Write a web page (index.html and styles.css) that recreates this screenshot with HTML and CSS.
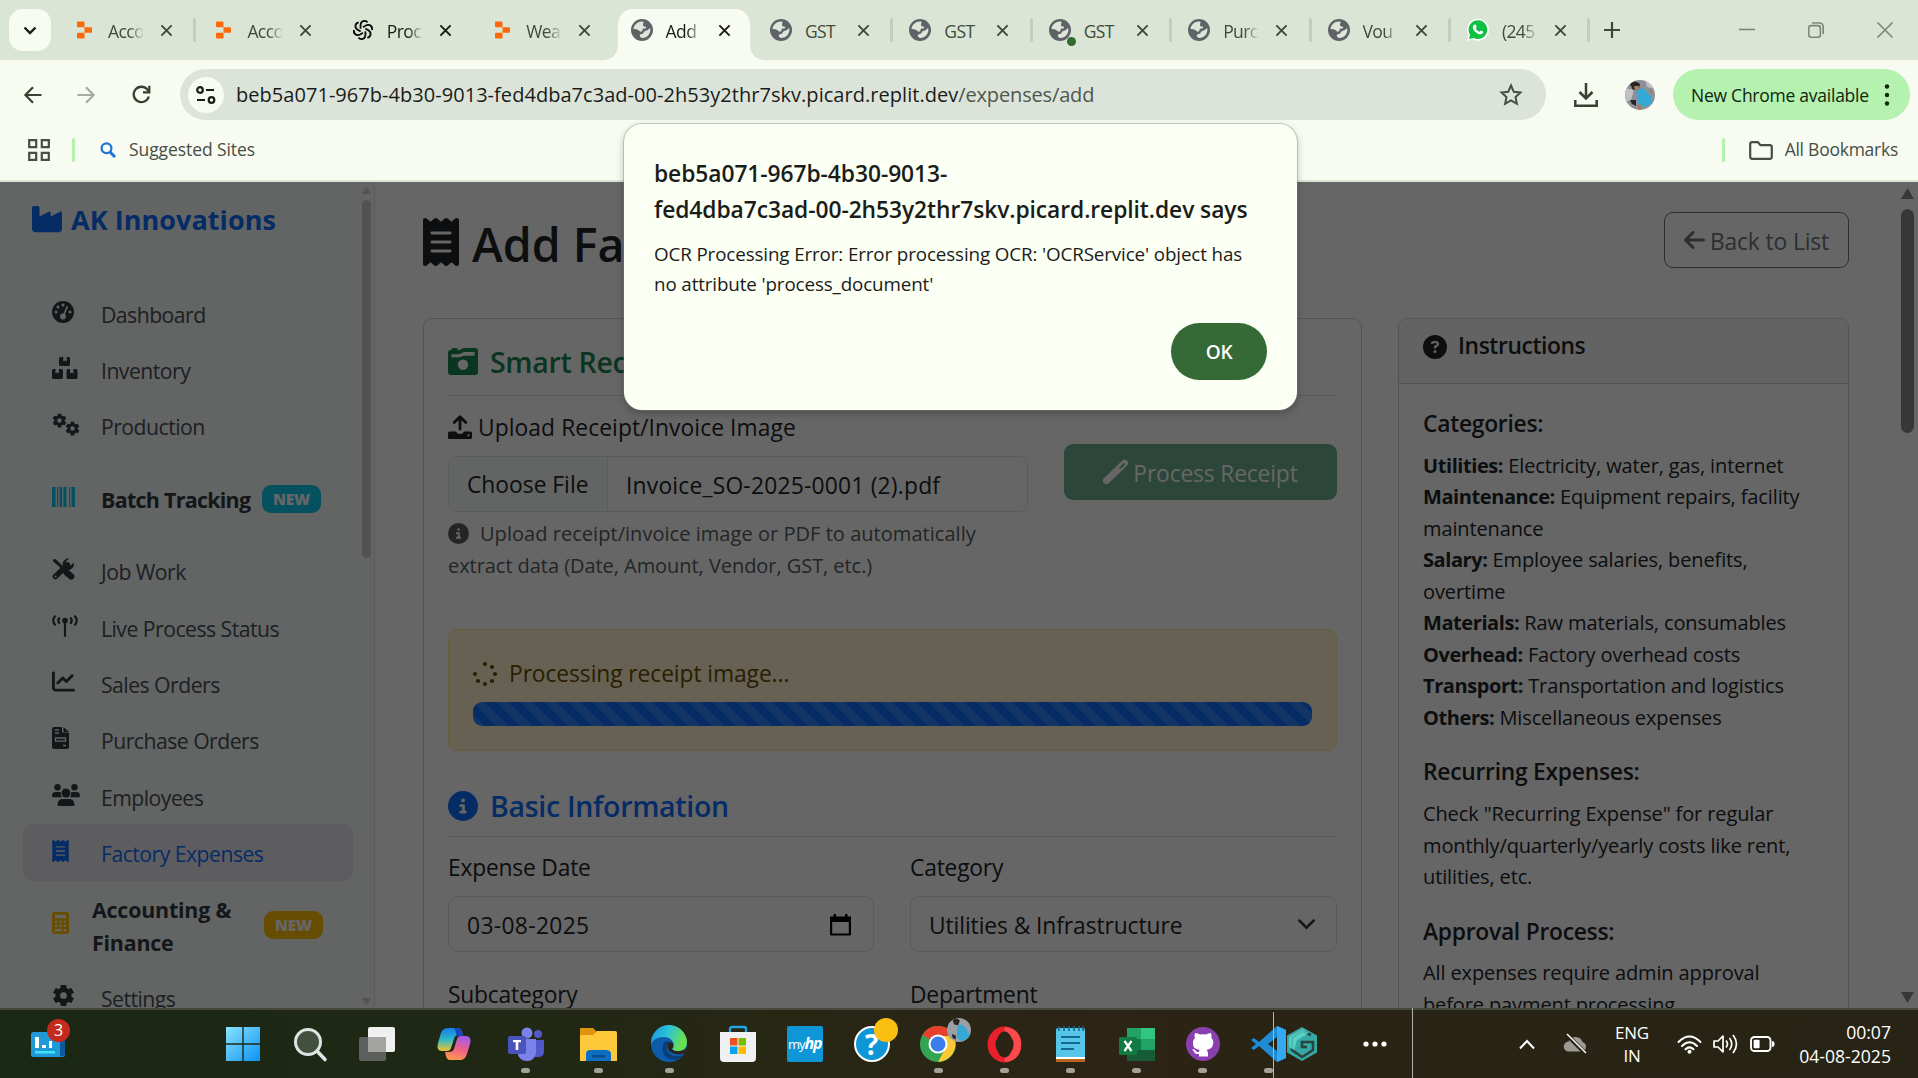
FILE: index.html
```html
<!DOCTYPE html>
<html lang="en">
<head>
<meta charset="utf-8">
<title>Add Factory Expense</title>
<link rel="stylesheet" href="styles.css">
</head>
<body>
<svg class="defs" aria-hidden="true">
  <defs>
    <symbol id="globe" viewBox="0 0 22 22"><circle cx="11" cy="11" r="11" fill="#5f6368"/><path d="M12 2.600C7.500 1.800 3 5.500 2.500 10c2.500-.3 4.500.4 6 2 1.200 1.300 3 .6 3-1 0-1.400 1.200-1.500 2.500-1.400 1.500 0 1.700-1.600.2-2-1.700-.4-2.200-.8-2.200-2.200C12 4.200 13.300 4 12 2.600zM19.200 9c-1.400 1-2 2.400-4.200 2.700-2.300.3-2 2-3 2.700-1.300.9-3 .4-3.200 1.900-.1 1.200.6 2.200 2.200 2.700C16.500 19 20.300 14 19.200 9z" fill="#dde6d8"/></symbol>
    <symbol id="replit" viewBox="0 0 16 18"><path d="M1 0h6q1 0 1 1v5H1Q0 6 0 5V1q0-1 1-1zM8 6h7q1 0 1 1v4q0 1-1 1H8zM1 12h7v5q0 1-1 1H1q-1 0-1-1v-4q0-1 1-1z" fill="#fb6a0a"/></symbol>
    <symbol id="close" viewBox="0 0 14 14"><path d="M1.500 1.500l11 11M12.500 1.500l-11 11" stroke="currentColor" stroke-width="2.100" fill="none"/></symbol>
    <symbol id="receipt" viewBox="0 0 384 512"><path fill="currentColor" d="M14 2.200C22.500-1.700 32.500-.3 39.600 5.800L80 40.400 120.400 5.800c9-7.700 22.300-7.700 31.200 0L192 40.400 232.400 5.800c9-7.700 22.300-7.700 31.200 0L304 40.400 344.400 5.800c7.100-6.100 17.100-7.500 25.600-3.600s14 12.400 14 21.800V488c0 9.400-5.500 17.900-14 21.800s-18.500 2.500-25.600-3.600L304 471.600l-40.400 34.600c-9 7.700-22.300 7.700-31.200 0L192 471.600l-40.400 34.600c-9 7.700-22.300 7.700-31.200 0L80 471.600 39.600 506.200c-7.100 6.100-17.100 7.500-25.600 3.600S0 497.400 0 488V24C0 14.600 5.500 6.100 14 2.200zM96 144c-8.800 0-16 7.200-16 16s7.200 16 16 16H288c8.800 0 16-7.200 16-16s-7.200-16-16-16H96zM80 352c0 8.800 7.200 16 16 16H288c8.800 0 16-7.200 16-16s-7.200-16-16-16H96c-8.800 0-16 7.200-16 16zM96 240c-8.800 0-16 7.200-16 16s7.200 16 16 16H288c8.800 0 16-7.200 16-16s-7.200-16-16-16H96z"/></symbol>
    <symbol id="info" viewBox="0 0 512 512"><path fill="currentColor" d="M256 512A256 256 0 1 0 256 0a256 256 0 1 0 0 512zM216 336h24V272H216c-13.300 0-24-10.700-24-24s10.700-24 24-24h48c13.300 0 24 10.700 24 24v88h8c13.300 0 24 10.700 24 24s-10.700 24-24 24H216c-13.300 0-24-10.700-24-24s10.700-24 24-24zm40-208a32 32 0 1 1 0 64 32 32 0 1 1 0-64z"/></symbol>
    <symbol id="gear" viewBox="0 0 24 24"><g stroke="currentColor" fill="none"><circle cx="12" cy="12" r="6" stroke-width="5"/><path d="M12 1v4.500M12 18.500V23M2.500 6.500l3.900 2.200M17.600 15.300l3.900 2.200M2.500 17.500l3.900-2.200M17.600 8.700l3.900-2.200" stroke-width="6" stroke-linejoin="round"/></g></symbol>
  </defs>
</svg>

<header class="chrome">
  <div class="tabstrip">
    <button class="tab-search"><svg width="14" height="9" viewBox="0 0 14 9"><path d="M1.500 1.500L7 7l5.500-5.500" fill="none" stroke="#1a1c19" stroke-width="2.400"/></svg></button>
    <div class="tabs">
      <div class="tab sep"><svg class="fav rep"><use href="#replit"/></svg><span class="tt">Acco</span><svg class="x"><use href="#close"/></svg></div>
      <div class="tab"><svg class="fav rep"><use href="#replit"/></svg><span class="tt">Acco</span><svg class="x"><use href="#close"/></svg></div>
      <div class="tab dark"><svg class="fav" viewBox="0 0 22 22"><g fill="none" stroke="#111" stroke-width="1.500"><g id="petal"><path d="M11 8.200l3.300-1.900c3-1.500 6.400 1.300 5.500 4.600"/><path d="M8.500 9.500V6C8.600 2 13 .4 15.600 3.200"/></g><use href="#petal" transform="rotate(60 11 11)"/><use href="#petal" transform="rotate(120 11 11)"/><use href="#petal" transform="rotate(180 11 11)"/><use href="#petal" transform="rotate(240 11 11)"/><use href="#petal" transform="rotate(300 11 11)"/></g></svg><span class="tt">Proc</span><svg class="x"><use href="#close"/></svg></div>
      <div class="tab"><svg class="fav rep"><use href="#replit"/></svg><span class="tt">Wea</span><svg class="x"><use href="#close"/></svg></div>
      <div class="tab active dark"><svg class="fav"><use href="#globe"/></svg><span class="tt">Add</span><svg class="x"><use href="#close"/></svg></div>
      <div class="tab sep"><svg class="fav"><use href="#globe"/></svg><span class="tt full">GST</span><svg class="x"><use href="#close"/></svg></div>
      <div class="tab sep"><svg class="fav"><use href="#globe"/></svg><span class="tt full">GST</span><svg class="x"><use href="#close"/></svg></div>
      <div class="tab sep alert-dot"><svg class="fav"><use href="#globe"/></svg><span class="tt full">GST</span><svg class="x"><use href="#close"/></svg></div>
      <div class="tab sep"><svg class="fav"><use href="#globe"/></svg><span class="tt">Purc</span><svg class="x"><use href="#close"/></svg></div>
      <div class="tab sep"><svg class="fav"><use href="#globe"/></svg><span class="tt">Vou</span><svg class="x"><use href="#close"/></svg></div>
      <div class="tab sep"><svg class="fav" viewBox="0 0 22 22"><path d="M0 22l1.600-5.700A11 11 0 1 1 6 20.500z" fill="#fff"/><path d="M2 20l1-4.200A9.400 9.400 0 1 1 6.500 19z" fill="#0fc143"/><path d="M7 6c1-.9 1.700-.5 2.100.4l.6 1.400c.1.800-.9 1.200-.8 1.700.8 1.700 1.900 2.600 3.500 3.200.6 0 1-1.200 1.600-1.200l2 1c.5.400-.1 2.200-1.500 2.700-3.600 1-9-4-8.700-7.300 0-.8.600-1.400 1.200-1.900z" fill="#fff"/></svg><span class="tt">(245</span><svg class="x"><use href="#close"/></svg></div>
    </div>
    <svg class="newtab" width="16" height="16" viewBox="0 0 16 16"><path d="M8 0v16M0 8h16" stroke="#3d473a" stroke-width="2.200"/></svg>
    <div class="winctl">
      <svg width="16" height="16" viewBox="0 0 16 16"><path d="M0 7.500h16" stroke="#7d857a" stroke-width="1.600"/></svg>
      <svg width="16" height="16" viewBox="0 0 16 16"><g fill="none" stroke="#7d857a" stroke-width="1.600"><rect x=".8" y="3.600" width="11.600" height="11.600" rx="2.500"/><path d="M4 1h7.200c2.500 0 4 1.500 4 4v7"/></g></svg>
      <svg width="16" height="16" viewBox="0 0 16 16"><path d="M.5.500l15 15M15.500.500l-15 15" stroke="#7d857a" stroke-width="1.600"/></svg>
    </div>
  </div>

  <div class="toolbar">
    <svg class="nav-ic" viewBox="0 0 18 18"><path d="M17.500 9H1.600M9 1.300L1.400 9 9 16.700" fill="none" stroke="#36422f" stroke-width="2.200"/></svg>
    <svg class="nav-ic" viewBox="0 0 18 18"><path d="M.5 9h15.900M9 1.300L16.600 9 9 16.700" fill="none" stroke="#a5aaa0" stroke-width="2.200"/></svg>
    <svg class="nav-ic reload" viewBox="0 0 19 19"><path d="M16.800 11.500A7.700 7.700 0 1 1 15.300 4.500L17.500 6.800" fill="none" stroke="#36422f" stroke-width="2.300"/><path d="M18.400.800v7.600h-7.400V6.200h5.200V.8z" fill="#36422f"/></svg>
    <div class="omnibox">
      <span class="site"><svg width="20" height="18" viewBox="0 0 20 18"><g fill="none" stroke="#1a1c19" stroke-width="2.200"><circle cx="4" cy="4" r="2.800"/><path d="M10 4h8M1 14h8"/><circle cx="15.500" cy="14" r="2.800"/></g></svg></span>
      <span class="url">beb5a071-967b-4b30-9013-fed4dba7c3ad-00-2h53y2thr7skv.picard.replit.dev<i>/expenses/add</i></span>
      <svg class="star" width="24" height="23" viewBox="0 0 24 23"><path d="M12 2.500l2.800 6.300 6.700.7-5 4.600 1.400 6.700L12 17.400l-5.900 3.400 1.400-6.700-5-4.600 6.700-.7z" fill="none" stroke="#474e44" stroke-width="2"/></svg>
    </div>
    <svg class="download" width="24" height="24" viewBox="0 0 24 24"><path d="M12 0v15M5.500 9l6.500 6.500L18.500 9M1.300 17v5.700h21.400V17" fill="none" stroke="#36422f" stroke-width="2.500"/></svg>
    <svg class="avatar" width="30" height="30" viewBox="0 0 30 30"><clipPath id="av"><circle cx="15" cy="15" r="15"/></clipPath><g clip-path="url(#av)"><path fill="#8b909a" d="M0 0h30v30H0z"/><path fill="#c0bfc2" d="M0 8l9 2-3 10-6 2zM20 0l10 3v6l-8-2z"/><path fill="#2a2524" d="M5 4q5-5 10 0l-1 5-6 1zM5 20l6 0v6l-4-2z"/><path fill="#a47c66" d="M9 6l5 0 0 5-4 0zM13 24l4 1-1 5h-3zM24 10l3 1-1 4z"/><path fill="#35a9d5" d="M11 11q6-5 9-1 8 7 7 14l-9 3-6-5q2-6-1-11z"/></g></svg>
    <div class="update"><span>New Chrome available</span><svg width="6" height="22" viewBox="0 0 6 22"><g fill="#12240f"><circle cx="3" cy="2.500" r="2.200"/><circle cx="3" cy="11" r="2.200"/><circle cx="3" cy="19.500" r="2.200"/></g></svg></div>
  </div>

  <div class="bookmarks">
    <svg width="22" height="22" viewBox="0 0 22 22"><path d="M1.200 1.200h7v7h-7zM13.800 1.200h7v7h-7zM1.200 13.800h7v7h-7zM13.800 13.800h7v7h-7z" fill="none" stroke="#474e44" stroke-width="2.200"/></svg>
    <span class="bar"></span>
    <svg class="bsearch" width="16" height="16" viewBox="0 0 16 16"><g fill="none" stroke="#1f76d2"><circle cx="6.500" cy="6.300" r="4.900" stroke-width="2.300"/><path d="M10 10l5 5" stroke-width="3"/></g></svg>
    <span class="bm">Suggested Sites</span>
    <span class="bar right"></span>
    <svg class="folder" width="24" height="19" viewBox="0 0 24 19"><path d="M1.200 3.200q0-2 2-2h5.600l2.700 3h9.300q2 0 2 2v9.600q0 2-2 2H3.200q-2 0-2-2z" fill="none" stroke="#474e44" stroke-width="2.200"/></svg>
    <span class="bm">All Bookmarks</span>
  </div>
</header>

<div class="page">
  <aside class="sidebar">
    <div class="brand"><svg width="30" height="30" viewBox="0 0 512 512"><path fill="currentColor" d="M32 32C14.300 32 0 46.300 0 64V432c0 26.500 21.500 48 48 48H464c26.500 0 48-21.500 48-48V152.200c0-18.200-19.400-29.700-35.400-21.100L320 215.400V152.200c0-18.200-19.400-29.700-35.400-21.100L128 215.400V64c0-17.700-14.300-32-32-32H32z"/></svg><span>AK Innovations</span></div>
    <nav class="menu">
      <a class="item"><svg width="22" height="22" viewBox="0 0 22 22"><circle cx="11" cy="11" r="11" fill="currentColor"/><g fill="#f8f9fa"><circle cx="11" cy="4" r="1.500"/><circle cx="6" cy="6" r="1.500"/><circle cx="4" cy="11" r="1.500"/><circle cx="18" cy="11" r="1.500"/><circle cx="11" cy="15.500" r="2.900"/></g><path d="M11.500 14.500l3.700-8.600" stroke="#f8f9fa" stroke-width="1.600" stroke-linecap="round"/></svg><span class="lb">Dashboard</span></a>
      <a class="item"><svg width="26" height="22" viewBox="0 0 26 22"><path fill="currentColor" d="M8.500 0h2.800v4.500l1.700-1 1.700 1V0h2.100Q18 0 18 1.500v6Q18 9 16.500 9h-8Q7 9 7 7.500v-6Q7 0 8.500 0zM1.500 12h2v4.500l1.700-1 1.700 1V12h2.600Q11 12 11 13.500v7q0 1.500-1.500 1.500h-8Q0 22 0 20.500v-7Q0 12 1.500 12zM16 12h2v4.500l1.700-1 1.700 1V12h2.600q1.500 0 1.500 1.500v7q0 1.500-1.500 1.500h-8q-1.500 0-1.500-1.500v-7Q14.500 12 16 12z"/></svg><span class="lb">Inventory</span></a>
      <a class="item"><svg width="28" height="23" viewBox="0 0 28 23"><use href="#gear" x="0" y="0" width="15" height="15"/><use href="#gear" x="13" y="8" width="15" height="15"/></svg><span class="lb">Production</span></a>
      <a class="item tall bold"><svg class="cyan" width="23" height="20" viewBox="0 0 23 20"><path fill="currentColor" d="M0 0h3.600v20H0zM4.900 0h1.300v20H4.900zM7.600 0h2.600v20H7.600zM11.500 0h3v20h-3zM17 0h1.300v20H17zM19.500 0H23v20h-3.500z"/></svg><span class="lb">Batch Tracking</span><b class="badge b-cyan">NEW</b></a>
      <a class="item"><svg width="23" height="22" viewBox="0 0 23 22"><g fill="none" stroke="currentColor" stroke-linecap="round"><path d="M2.500 2.500l3.500 3M6 5.500l6 6" stroke-width="3"/><path d="M14.500 14.500l4.800 4" stroke-width="6.200"/><path d="M3.400 18.600L15.500 7" stroke-width="5.500"/></g><path d="M21.800 4.500l-3.600 3.600-3.700-.8-.8-3.600L17.300.2a6.500 6.500 0 0 0-6 9.500l3 2.600a6.600 6.600 0 0 0 7.500-7.800z" fill="currentColor"/><circle cx="3.600" cy="18.400" r="1" fill="#f8f9fa"/></svg><span class="lb">Job Work</span></a>
      <a class="item"><svg width="26" height="22" viewBox="0 0 26 22"><g fill="none" stroke="currentColor" stroke-width="2.200" stroke-linecap="round"><path d="M3 1.300q-3.600 4.200 0 8.400M23 1.300q3.600 4.200 0 8.400M7.200 3.200q-1.900 2.500 0 5M18.800 3.200q1.900 2.500 0 5M13 8v13" /></g><circle cx="13" cy="5.600" r="2.900" fill="currentColor"/></svg><span class="lb">Live Process Status</span></a>
      <a class="item"><svg width="23" height="23" viewBox="0 0 512 512"><path fill="currentColor" d="M64 64c0-17.700-14.300-32-32-32S0 46.300 0 64V400c0 44.200 35.800 80 80 80H480c17.700 0 32-14.300 32-32s-14.300-32-32-32H80c-8.800 0-16-7.200-16-16V64zm406.600 86.600c12.500-12.500 12.500-32.800 0-45.300s-32.800-12.500-45.300 0L320 210.700l-57.400-57.400c-12.500-12.500-32.800-12.500-45.300 0l-112 112c-12.500 12.500-12.500 32.800 0 45.300s32.800 12.500 45.300 0L240 221.300l57.400 57.400c12.500 12.500 32.800 12.500 45.300 0l128-128z"/></svg><span class="lb">Sales Orders</span></a>
      <a class="item"><svg width="17" height="22" viewBox="0 0 17 22"><path fill="currentColor" d="M2 0h8v5.500h7V20q0 2-2 2H2q-2 0-2-2V2Q0 0 2 0zM11.500 0L17 5h-5.500z"/><path d="M3 3h4M3 6h4M3.500 11v3.200h10V11zM11 18.500h3" fill="none" stroke="#f8f9fa" stroke-width="1.300"/></svg><span class="lb">Purchase Orders</span></a>
      <a class="item"><svg width="28" height="22" viewBox="0 0 28 22"><g fill="currentColor"><circle cx="5.500" cy="3.200" r="3.200"/><circle cx="22.500" cy="3.200" r="3.200"/><circle cx="14" cy="9" r="4.500"/><path d="M3.500 8h4q1 0 1.500.4-.8 2.700 1 4.900H1Q0 13.300 0 12.200 0 8 3.500 8zM24.500 8h-4q-1 0-1.500.4.800 2.700-1 4.900h9q1 0 1-1.100Q28 8 24.500 8zM11 15h6q5.500 0 5.500 5.700 0 1.300-1.300 1.300H6.800q-1.300 0-1.300-1.300Q5.500 15 11 15z"/></g></svg><span class="lb">Employees</span></a>
      <a class="item current"><svg width="17" height="22"><use href="#receipt"/></svg><span class="lb">Factory Expenses</span></a>
      <a class="item tall bold acc"><svg width="17" height="22" viewBox="0 0 17 22"><rect width="17" height="22" rx="2.200" fill="#ffc107"/><path d="M3 2.800h11v3.400H3zM3 8.500h2.300v2.300H3zM7.300 8.500h2.300v2.300H7.300zM11.700 8.500H14v2.300h-2.300zM3 12.700h2.300V15H3zM7.300 12.700h2.300V15H7.300zM11.700 12.700H14V15h-2.300zM3 16.900h6.600v2.300H3zM11.700 16.900H14v2.300h-2.300z" fill="#f8f9fa"/></svg><span class="lb two">Accounting &amp;<br>Finance</span><b class="badge b-yellow">NEW</b></a>
      <a class="item"><svg width="23" height="23"><use href="#gear"/></svg><span class="lb">Settings</span></a>
    </nav>
    <div class="sbar"><i class="up"></i><i class="thumb"></i><i class="down"></i></div>
  </aside>

  <main class="main">
    <div class="head">
      <h1><svg width="36" height="48"><use href="#receipt"/></svg><span>Add Factory Expense</span></h1>
      <a class="back"><svg width="21" height="24" viewBox="0 0 448 512"><path fill="currentColor" d="M9.400 233.400c-12.500 12.500-12.500 32.800 0 45.300l160 160c12.500 12.500 32.800 12.500 45.300 0s12.500-32.800 0-45.300L109.200 288 416 288c17.700 0 32-14.300 32-32s-14.300-32-32-32l-306.700 0L214.600 118.600c12.500-12.500 12.500-32.800 0-45.300s-32.800-12.500-45.300 0l-160 160z"/></svg><span>Back to List</span></a>
    </div>
    <div class="cols">
      <section class="card form">
        <h5 class="green"><svg width="30" height="27" viewBox="0 0 30 27"><path fill="currentColor" d="M3.500 2V1q0-1 1-1h4q1 0 1 1v1h2l3-1.500Q15 0 16 0h11q3 0 3 3v21q0 3-3 3H3q-3 0-3-3V4.500Q0 2.500 2 2zM3.500 6.200v3h8l4.500-1.500h10.500V4H16l-4.500 2.200zM15 11.500a5.200 5.200 0 1 0 0 10.400 5.200 5.200 0 1 0 0-10.400z" fill-rule="evenodd"/></svg><span>Smart Receipt Processing</span></h5>
        <div class="ocr">
          <div class="file">
            <label class="lab"><svg width="24" height="24" viewBox="0 0 24 24"><path d="M12 14V2.500M6.200 7.500L12 1.800l5.800 5.700" fill="none" stroke="currentColor" stroke-width="2.800" stroke-linecap="round" stroke-linejoin="round"/><path d="M1.500 16.500H8q.8 2.500 4 2.500t4-2.500h6.500q1.500 0 1.500 1.500v4.500q0 1.500-1.500 1.500h-21Q0 24 0 22.500V18q0-1.500 1.500-1.500z" fill="currentColor"/><circle cx="20.500" cy="20.300" r="1.100" fill="#fff"/></svg><span>Upload Receipt/Invoice Image</span></label>
            <div class="input fileinput"><span class="choose">Choose File</span><span class="fname">Invoice_SO-2025-0001 (2).pdf</span></div>
            <p class="hint"><svg width="21" height="21"><use href="#info"/></svg><span>Upload receipt/invoice image or PDF to automatically<br></span>extract data (Date, Amount, Vendor, GST, etc.)</p>
          </div>
          <a class="process"><svg width="25" height="24" viewBox="0 0 25 24"><path d="M3.500 20.500L21.500 3.200" stroke="#fff" stroke-width="7" stroke-linecap="round"/><path d="M17 8l4-3.800" stroke="#53a17d" stroke-width="1.600" stroke-linecap="round"/></svg><span>Process Receipt</span></a>
        </div>
        <div class="notice">
          <p><svg width="24" height="24" viewBox="0 0 24 24"><g fill="currentColor"><circle cx="12" cy="2" r="2.100"/><circle cx="19" cy="5" r="2.100"/><circle cx="22" cy="12" r="2.100"/><circle cx="19" cy="19" r="2.100"/><circle cx="12" cy="22" r="2.100"/><circle cx="5" cy="19" r="2.100"/><circle cx="2" cy="12" r="2.100"/></g></svg><span>Processing receipt image...</span></p>
          <div class="progress"></div>
        </div>
        <h5 class="blue"><svg width="30" height="30"><use href="#info"/></svg><span>Basic Information</span></h5>
        <div class="grid">
          <div><label class="lab">Expense Date</label><div class="input"><span class="date">03-08-2025</span><svg width="21" height="22" viewBox="0 0 21 22"><path d="M1.100 4h18.800v16.500H1.100z" fill="none" stroke="#000" stroke-width="2.200" stroke-linejoin="round"/><path d="M0 2.500h21V8H0zM3.500 0H6v4H3.500zM15 0h2.500v4H15z"/></svg></div></div>
          <div><label class="lab">Category</label><div class="input"><span class="sel">Utilities &amp; Infrastructure</span><svg class="chev" width="17" height="11" viewBox="0 0 17 11"><path d="M1.300 1.500l7.200 7.200 7.200-7.200" fill="none" stroke="#343a40" stroke-width="2.500" stroke-linecap="round"/></svg></div></div>
          <div><label class="lab">Subcategory</label><div class="input"></div></div>
          <div><label class="lab">Department</label><div class="input"></div></div>
        </div>
      </section>
      <section class="card help">
        <div class="card-head"><svg width="24" height="24" viewBox="0 0 512 512"><path fill="currentColor" d="M256 512A256 256 0 1 0 256 0a256 256 0 1 0 0 512zM169.800 165.300c7.900-22.300 29.100-37.300 52.800-37.300h58.300c34.900 0 63.100 28.300 63.100 63.100c0 22.600-12.100 43.500-31.700 54.800L280 264.400c-.2 13-10.900 23.600-24 23.600c-13.300 0-24-10.700-24-24V250.500c0-8.600 4.600-16.500 12.100-20.800l44.300-25.400c4.700-2.700 7.600-7.700 7.600-13.100c0-8.400-6.800-15.100-15.100-15.100H222.600c-3.400 0-6.400 2.100-7.500 5.300l-.4 1.200c-4.400 12.500-18.200 19-30.600 14.600s-19-18.200-14.600-30.600l.4-1.200zM224 352a32 32 0 1 1 64 0 32 32 0 1 1 -64 0z"/></svg><h6>Instructions</h6></div>
        <div class="card-body">
          <h6>Categories:</h6>
          <p><b>Utilities:</b> Electricity, water, gas, internet<br><b>Maintenance:</b> Equipment repairs, facility<br>maintenance<br><b>Salary:</b> Employee salaries, benefits,<br>overtime<br><b>Materials:</b> Raw materials, consumables<br><b>Overhead:</b> Factory overhead costs<br><b>Transport:</b> Transportation and logistics<br><b>Others:</b> Miscellaneous expenses</p>
          <h6>Recurring Expenses:</h6>
          <p>Check "Recurring Expense" for regular<br>monthly/quarterly/yearly costs like rent,<br>utilities, etc.</p>
          <h6>Approval Process:</h6>
          <p>All expenses require admin approval<br>before payment processing.</p>
        </div>
      </section>
    </div>
  </main>
  <div class="pbar"><i class="up"></i><i class="thumb"></i><i class="down"></i></div>
  <div class="dim"></div>
</div>

<div class="dialog" role="alertdialog">
  <h2>beb5a071-967b-4b30-9013-<br>fed4dba7c3ad-00-2h53y2thr7skv.picard.replit.dev says</h2>
  <p>OCR Processing Error: Error processing OCR: 'OCRService' object has<br>no attribute 'process_document'</p>
  <button>OK</button>
</div>

<footer class="taskbar">
  <span class="widget"><svg width="36" height="26" viewBox="0 0 36 26"><rect width="34" height="25" y="1" rx="2.500" fill="#2099d8"/><path d="M29 4h5v20l-5 2z" fill="#0b5a9e"/><path d="M4 6h4v11H4zM11 14h4v3h-4zM18 10h3v7h-3z" fill="#fff"/><path d="M4 20h20v2.500H4z" fill="#3fe3f5"/></svg><b>3</b></span>
  <div class="apps">
    <span class="app"><svg width="36" height="36" viewBox="0 0 36 36"><defs><linearGradient id="w" x2="1" y2="1"><stop stop-color="#8be3ff"/><stop offset="1" stop-color="#0a92f3"/></linearGradient></defs><path d="M1 1h16.300v16.300H1zM18.700 1H35v16.300H18.700zM1 18.700h16.300V35H1zM18.700 18.700H35V35H18.700z" fill="url(#w)"/></svg></span>
    <span class="app"><svg width="34" height="34" viewBox="0 0 34 34"><circle cx="15" cy="15" r="12.500" fill="#44503f" stroke="#dfe3e4" stroke-width="3"/><path d="M24 24l8 8.500" stroke="#dfe3e4" stroke-width="3.600" stroke-linecap="round"/></svg></span>
    <span class="app"><svg width="36" height="34" viewBox="0 0 36 34"><rect y="10" width="27" height="24" rx="2" fill="#5d5f5c"/><rect x="9" width="27" height="25" rx="2" fill="#f0f0f0"/><path d="M9 10h18v15H11q-2 0-2-2z" fill="#a3a4a2"/></svg></span>
    <span class="app a4"><svg width="34" height="32" viewBox="0 0 34 32"><defs><linearGradient id="c1" x1="0" y1="0" x2="0" y2="1"><stop stop-color="#1b7bea"/><stop offset=".5" stop-color="#2cb8c8"/><stop offset="1" stop-color="#f3c32f"/></linearGradient><linearGradient id="c2" x1=".6" y1="0" x2=".3" y2="1"><stop stop-color="#a35ce8"/><stop offset=".5" stop-color="#f0608a"/><stop offset="1" stop-color="#fb9a4a"/></linearGradient></defs><path d="M11 0h10q3 0 4 4l1 3h-4q-4 0-5 4l-3 9q-1 3-4 3H5q-6 0-4-8L4 5q2-5 7-5z" fill="url(#c1)"/><path d="M23 32H13q-3 0-4-4l-1-4h4q4 0 5-3l3-10q1-3 4-3h5q6 0 4 8l-3 10q-2 6-7 6z" fill="url(#c2)"/><path d="M17 0h4q3 0 4 4l1 4h-4q-4 0-3-4z" fill="#1b45b8"/></svg></span>
    <span class="app a5 run"><svg width="36" height="34" viewBox="0 0 36 34"><circle cx="19" cy="6" r="5.500" fill="#7b83eb"/><circle cx="30" cy="7" r="4" fill="#5059c9"/><path d="M24 13h12v11q0 6-6 6h-6z" fill="#5059c9"/><path d="M9 12h19v13q-1 9-9 9t-10-9z" fill="#7b83eb"/><rect y="9" width="18" height="18" rx="2" fill="#4b53bc"/><path d="M5 13h8v2.300h-2.700V23H7.700v-7.700H5z" fill="#fff"/></svg></span>
    <span class="app a6 run"><svg width="37" height="33" viewBox="0 0 37 33"><path d="M1 0h12l4 4v6H0V1q0-1 1-1z" fill="#e0940c"/><path d="M0 7h13l4-4h18q2 0 2 2v28H0z" fill="#fdc93b"/><path d="M6 33v-7q0-4 4-4h16q5 0 5 4v7z" fill="#0d6fc1"/><path d="M12 27h13v2.500H12z" fill="#0a4a88"/></svg></span>
    <span class="app a7 run"><svg width="36" height="36" viewBox="0 0 36 36"><defs><linearGradient id="e" x2="1" y2=".3"><stop stop-color="#1a8fe0"/><stop offset=".5" stop-color="#2cc2d6"/><stop offset="1" stop-color="#6be04f"/></linearGradient></defs><circle cx="18" cy="18" r="18" fill="#0d5cab"/><path d="M0 18A18 18 0 0 1 36 16q0 9-9 9-5 0-6-2 3-3 1-7-3-5-9-5Q3 11 0 18z" fill="url(#e)"/><path d="M12 18q-3 15 12 16 5-1 8-5-11 3-15-3-3-5 2-10-5-3-7 2z" fill="#0a3d7c"/><path d="M17 18q3-4 5 0 1 3-1 5 2 3 9 2 4-1 5-3l-1 5q-3 2-9 1-10-2-8-10z" fill="#29241a"/></svg></span>
    <span class="app a8"><svg width="36" height="36" viewBox="0 0 36 36"><path d="M10 7V3q0-2 2-2h12q2 0 2 2v4" fill="none" stroke="#22a6e8" stroke-width="2.300"/><path d="M0 6h36v26q0 4-4 4H4q-4 0-4-4z" fill="#eef0f2"/><path d="M10 12h7.500v7.500H10z" fill="#f04e25"/><path d="M18.500 12H26v7.500h-7.500z" fill="#7fba00"/><path d="M10 20.500h7.500V28H10z" fill="#0aa0ee"/><path d="M18.500 20.500H26V28h-7.500z" fill="#ffb901"/></svg></span>
    <span class="app"><em class="hp">my<b>hp</b></em></span>
    <span class="app"><em class="ask">?</em></span>
    <span class="app run"><svg width="36" height="36" viewBox="0 0 36 36"><circle cx="18" cy="18" r="18" fill="#33a552"/><path d="M18 18L2.400 9A18 18 0 0 1 33.600 9z" fill="#e8402f"/><path d="M18 10h15.600A18 18 0 0 1 18 36l7-13z" fill="#fcc934"/><circle cx="18" cy="18" r="9.500" fill="#fff"/><circle cx="18" cy="18" r="7.500" fill="#3b7ded"/></svg><svg class="mini" width="24" height="24" viewBox="0 0 30 30"><g clip-path="url(#av)"><path fill="#9a9fa6" d="M0 0h30v30H0z"/><path fill="#2a2524" d="M7 3q5-5 9 0l-2 6-5-1zM6 20l5 2v5l-4-2z"/><path fill="#35a9d5" d="M13 10q5-3 8 0 7 7 7 14l-10 5-6-5z"/></g></svg></span>
    <span class="app slim run"><svg width="35" height="35" viewBox="0 0 35 35"><ellipse cx="17.500" cy="17.500" rx="13" ry="14" fill="none" stroke="#e8202c" stroke-width="8"/><path d="M17.500 3.500q13 1 13 14t-13 14" fill="none" stroke="#fa4a4c" stroke-width="7" /><ellipse cx="17.500" cy="17.500" rx="8" ry="13" fill="#292414"/></svg></span>
    <span class="app slim run"><svg width="29" height="36" viewBox="0 0 29 36"><rect y="2" width="29" height="34" rx="2" fill="#55c6e8"/><path d="M0 31h29v2H0z" fill="#fff"/><path d="M0 33h29v3H0z" fill="#b8651b"/><path d="M5 11h19M5 17h19M5 23h13" stroke="#11698f" stroke-width="2"/><path d="M3 0v5M8 0v5M13 0v5M18 0v5M23 0v5M27 0v5" stroke="#11698f" stroke-width="1.600"/></svg></span>
    <span class="app slim run"><svg width="36" height="33" viewBox="0 0 36 33"><path d="M8 0h28v33H8z" fill="#21a366"/><path d="M22 0h14v11H22z" fill="#33c481"/><path d="M8 11h14v11H8z" fill="#107c41"/><path d="M8 22h28v11H8z" fill="#185c37"/><rect y="9" width="18" height="18" rx="1.500" fill="#107c41"/><path d="M5.500 13l7 10M12.500 13l-7 10" stroke="#fff" stroke-width="2.200"/></svg></span>
    <span class="app slim run"><svg width="34" height="34" viewBox="0 0 34 34"><circle cx="17" cy="17" r="17" fill="#8a3fae"/><path d="M9 6q3 0 5 1.600 3-.7 6 0Q22 6 25 6q1 3 .3 4.800Q28 13.600 27 17.500 26 22 20.500 23q1.500 1.500 1.500 3v3.500h-9V27q-4 .7-5.500-3L6 22.500q3-.6 4 1.500 1 1.700 3 .8 0-1 .8-1.800Q7.500 22 7 17.500q-.6-4 2-6.700Q8 9 9 6z" fill="#fff"/></svg></span>
    <span class="app slim run"><svg width="36" height="36" viewBox="0 0 36 36"><path d="M26 0l9 4v28l-9 4L8 20l-5 4-3-2 5-4-5-4 3-2 5 4z" fill="#1f8ad6"/><path d="M26 0l9 4v28l-9 4z" fill="#35a9f2"/><path d="M26 11v14l-9-7z" fill="#292414"/></svg><i class="seam"></i></span>
    <span class="app g"><svg width="32" height="34" viewBox="0 0 32 34"><path d="M16 0l15 8.500v17L16 34 1 25.500v-17z" fill="#35a9a5"/><path d="M25 8l-9-4-10 7v12l10 7 11-7v-8H16v5h5" fill="none" stroke="#29443c" stroke-width="2.600"/><path d="M3 10l13-8 7 4-12 7-3 10-5-3z" fill="#62e3d3" opacity=".75"/></svg></span>
    <span class="more"><svg width="24" height="6" viewBox="0 0 24 6"><g fill="#fff"><circle cx="3" cy="3" r="2.600"/><circle cx="12" cy="3" r="2.600"/><circle cx="21" cy="3" r="2.600"/></g></svg></span>
    <i class="rule"></i>
  </div>
  <div class="tray">
    <svg width="16" height="11" viewBox="0 0 16 11"><path d="M1 9.500l7-7.500 7 7.500" fill="none" stroke="#fff" stroke-width="2"/></svg>
    <svg class="cloud" width="25" height="20" viewBox="0 0 25 20"><path d="M6 17.500a5 5 0 0 1-.5-10A7.500 7.500 0 0 1 19.500 8a5 5 0 0 1 0 9.500z" fill="#9b9a94"/><path d="M3 0l20 20" stroke="#292414" stroke-width="4"/><path d="M4 0l19 19" stroke="#fff" stroke-width="1.500"/></svg>
    <span class="lang">ENG<br>IN</span>
    <svg class="wifi" width="25" height="19" viewBox="0 0 25 19"><g fill="none" stroke="#fff" stroke-width="2" stroke-linecap="round"><path d="M1.500 7q11-11 22 0M5 11q7.500-7.500 15 0M8.500 14.300q4-3.800 8 0"/></g><circle cx="12.500" cy="16.800" r="2" fill="#fff"/></svg>
    <svg class="vol" width="25" height="20" viewBox="0 0 25 20"><path d="M1 7h4l5-5v16l-5-5H1z" fill="none" stroke="#fff" stroke-width="1.700" stroke-linejoin="round"/><path d="M13 6.500q3 3.500 0 7M16.500 4q4.500 6 0 12M20 1q7 9 0 18" fill="none" stroke="#fff" stroke-width="1.700"/></svg>
    <svg class="bat" width="25" height="16" viewBox="0 0 25 16"><rect x="1" y="1" width="19.500" height="14" rx="3.500" fill="none" stroke="#fff" stroke-width="1.900"/><path d="M22 5q2.500 0 2.500 3T22 11z" fill="#fff"/><rect x="3.600" y="3.700" width="6" height="8.600" rx="1" fill="#fff"/></svg>
    <span class="clock">00:07<br>04-08-2025</span>
  </div>
</footer>
</body>
</html>
```
FILE: styles.css
```css
* { box-sizing: border-box; }
body {
  margin: 0;
  width: 1918px;
  height: 1078px;
  overflow: hidden;
  position: relative;
  display: flex;
  flex-direction: column;
  font-family: "Open Sans", "Noto Sans", sans-serif;
  color: #212529;
  white-space: nowrap;
}
h1, h2, h5, h6, p { margin: 0; }
svg { flex: none; display: block; overflow: visible; }
.defs { position: absolute; width: 0; height: 0; }

/* ---------- browser chrome ---------- */
.chrome { height: 182px; flex: none; background: #f8fbf2; border-bottom: 2px solid #dde4d6; }
.tabstrip { height: 60px; background: #dbe5d5; display: flex; align-items: center; }
.tab-search {
  width: 42px; height: 42px; margin-left: 9px; padding: 0; border: 0; border-radius: 14px;
  background: #f8fbf2; display: flex; align-items: center; justify-content: center;
}
.tabs { display: flex; margin-left: 5px; height: 60px; }
.tab {
  position: relative; width: 139.4px; height: 60px; padding-left: 17px;
  display: flex; align-items: center; color: #3f4a3b;
}
.tab.sep::after { content: ""; position: absolute; right: -1px; top: 18px; width: 3px; height: 24px; border-radius: 2px; background: #c4ccbe; }
.fav { width: 22px; height: 22px; }
.fav.rep { width: 15px; height: 18px; margin: 0 3px 0 4px; }
.tt {
  width: 35px; margin-left: 13px; padding-top: 2px; font-size: 17.5px; letter-spacing: -0.6px;
  -webkit-mask-image: linear-gradient(90deg, #000 60%, transparent 104%);
  mask-image: linear-gradient(90deg, #000 60%, transparent 104%);
}
.tt.full { -webkit-mask-image: none; mask-image: none; }
.x { width: 13px; height: 13px; margin-left: 17px; }
.dark { color: #1a1c19; }
.active::before {
  content: ""; position: absolute; z-index: 0; left: 4px; top: 9px; width: 132px; height: 51px;
  border-radius: 15px 15px 0 0; background: #f8fbf2;
}
.active > * { position: relative; z-index: 1; }
.active::after {
  content: ""; position: absolute; left: -10px; bottom: 0; width: 160px; height: 14px;
  background:
    radial-gradient(circle at 0 0, transparent 13.5px, #f8fbf2 14px) left / 14px 14px no-repeat,
    radial-gradient(circle at 100% 0, transparent 13.5px, #f8fbf2 14px) right / 14px 14px no-repeat;
}
.alert-dot::before { content: ""; position: absolute; left: 35px; top: 37px; width: 9px; height: 9px; border-radius: 50%; background: #2f6b2e; z-index: 1; }
.newtab { margin-left: 15px; }
.winctl { display: flex; gap: 53px; margin-left: auto; margin-right: 25px; }

.toolbar { height: 69px; display: flex; align-items: center; padding-left: 24px; }
.nav-ic { width: 18px; height: 18px; margin-right: 35px; }
.reload { width: 19px; height: 19px; margin: 0 29px 0 2px; }
.omnibox {
  width: 1366px; height: 51px; border-radius: 26px; background: #dce4da;
  display: flex; align-items: center; padding: 0 23px 0 8px;
}
.site { width: 36px; height: 36px; border-radius: 50%; background: #f8fbf2; display: flex; align-items: center; justify-content: center; }
.url { margin-left: 12px; font-size: 20px; color: #1a1c19; letter-spacing: 0.04px; }
.url i { font-style: normal; color: #50574d; letter-spacing: -0.15px; }
.star { margin-left: auto; }
.download { margin-left: 28px; }
.avatar { margin-left: 27px; }
.update {
  width: 237px; height: 51px; margin-left: 18px; border-radius: 26px; background: #b5f2b0;
  display: flex; align-items: center; justify-content: space-between; padding: 0 20px 0 18px;
  color: #12240f; font-size: 17.5px; letter-spacing: -0.25px;
}
.bookmarks { height: 42px; display: flex; align-items: center; padding: 0 20px 0 28px; color: #474e44; font-size: 17.5px; }
.bm { margin-top: -2px; letter-spacing: -0.08px; }
.bm:last-child { letter-spacing: -0.25px; }
.bar { width: 3px; height: 24px; background: #b5f0ae; margin-left: 22px; border-radius: 2px; }
.bar.right { margin-left: auto; }
.bsearch { margin: 0 13px 0 25px; }
.folder { margin: 0 12px 0 24px; }

/* ---------- web page ---------- */
.page { position: relative; height: 826px; flex: none; display: flex; overflow: hidden; background: #fff; font-size: 22.8px; }
.dim { position: absolute; inset: 0; background: rgba(0, 0, 0, .6); }
.sidebar { position: relative; width: 375px; height: 826px; flex: none; background: #f8f9fa; border-right: 1px solid #dee2e6; }
.brand { height: 103px; padding: 0 0 29px 32px; display: flex; align-items: center; gap: 9px; color: #0d6efd; font-weight: 700; font-size: 27px; letter-spacing: 0.05px; }
.menu { padding: 0 21px 0 23px; }
.item {
  height: 56.35px; padding-left: 29px; border-radius: 9px;
  display: grid; grid-template-columns: 49px auto auto; justify-content: start; align-items: center;
  color: #495057; font-size: 21.2px; letter-spacing: -0.52px;
}
.item svg { margin-top: -3px; color: #343a40; }
.item .lb { padding-top: 2px; }
.item.tall { height: 88.6px; }
.item svg.cyan { color: #0dcaf0; }
.item.bold { grid-template-columns: 49px 148px auto; color: #343a40; font-size: 21.4px; font-weight: 700; letter-spacing: -0.7px; }
.item.acc { grid-template-columns: 40px 148px auto; letter-spacing: -0.2px; }
.item .lb.two { line-height: 33px; padding: 2px 0 0; }
.badge { width: 59px; height: 28px; margin: 1px 0 0 13px; border-radius: 9px; color: #fff; font-size: 15.5px; letter-spacing: -0.2px; line-height: 28px; text-align: center; }
.acc .badge { margin-left: 24px; }
.b-cyan { background: #0dcaf0; }
.b-yellow { background: #ffc107; }
.item.current { background: #e8e9ef; color: #0d6efd; }
.item.current svg { color: #0d6efd; }

.sbar { position: absolute; right: 3px; top: 0; width: 9px; height: 826px; }
.sbar i, .pbar i { position: absolute; left: 0; width: 100%; }
.up { top: 5px; height: 7px; background: #cfcfcf; clip-path: polygon(50% 0, 100% 100%, 0 100%); }
.down { bottom: 3px; height: 7px; background: #cfcfcf; clip-path: polygon(0 0, 100% 0, 50% 100%); }
.thumb { top: 18px; height: 358px; border-radius: 5px; background: #cdcdcd; }
.pbar { position: absolute; right: 4px; top: 0; width: 13px; height: 826px; }
.pbar .up { top: 6px; height: 11px; background: #8b8b8b; }
.pbar .down { bottom: 5px; height: 11px; background: #8b8b8b; }
.pbar .thumb { top: 27px; height: 224px; border-radius: 7px; background: #8b8b8b; }

.main { width: 1474px; padding: 30px 0 0 48px; flex: none; }
.head { height: 106px; display: flex; justify-content: space-between; align-items: flex-start; }
h1 { display: flex; align-items: flex-start; gap: 13px; padding-top: 6px; height: 54px; font-size: 46.5px; font-weight: 600; line-height: 48px; letter-spacing: 0; }
h1 span { padding-top: 2px; }
.back {
  width: 185px; height: 56px; border: 1.5px solid #6c757d; border-radius: 9px; color: #6c757d;
  display: flex; align-items: center; justify-content: center; gap: 5px; letter-spacing: -0.12px;
}
.back span, .process span { padding-top: 2px; }
.cols { display: flex; gap: 36px; }
.card { height: 1000px; border: 1px solid #d3d3d3; border-radius: 9px; }
.form { width: 939px; padding: 24px; }
h5 { height: 53px; display: flex; align-items: flex-start; gap: 12px; border-bottom: 1px solid #dee2e6; font-size: 28.5px; font-weight: 600; line-height: 38px; letter-spacing: -0.3px; }
h5 svg { margin-top: 5px; }
.green { color: #198754; }
.blue { color: #0d6efd; }
.ocr { display: flex; justify-content: space-between; height: 233px; }
.file { width: 580px; }
.lab { display: flex; align-items: center; gap: 6px; height: 36px; letter-spacing: -0.2px; }
.file .lab { margin: 13px 0 11px; letter-spacing: 0.08px; }
.input { height: 56px; border: 1px solid #dee2e6; border-radius: 9px; display: flex; align-items: center; padding: 1px 22px 0 18px; justify-content: space-between; }
.fileinput { padding: 0; justify-content: flex-start; overflow: hidden; }
.choose { width: 159px; padding: 1px 0 0 18px; height: 56px; line-height: 56px; background: #f8f9fa; border-right: 1px solid #dee2e6; }
.fname { padding: 2px 0 0 18px; letter-spacing: 0.22px; }
.date { letter-spacing: 0.35px; padding-top: 1px; }
.sel { letter-spacing: -0.08px; padding-top: 1px; }
.hint { padding-top: 6px; font-size: 20px; line-height: 31.5px; color: #585c60; letter-spacing: -0.05px; }
.hint span { letter-spacing: 0.04px; }
.hint svg { display: inline-block; vertical-align: -3px; margin-right: 11px; }
.process {
  width: 273px; height: 56px; margin-top: 48px; border-radius: 9px; background: #6eb091; color: #fff;
  display: flex; align-items: center; justify-content: center; gap: 5px; letter-spacing: -0.15px;
}
.notice { height: 122px; padding: 24px; border: 1px solid #ffe69c; border-radius: 9px; background: #fff3cd; color: #664d03; margin-bottom: 37px; }
.notice p { display: flex; align-items: center; gap: 12px; height: 39px; letter-spacing: -0.08px; }
.progress {
  height: 24px; margin-top: 9px; border-radius: 9px; background-color: #0d6efd; background-size: 24px 24px;
  background-image: linear-gradient(45deg, rgba(255,255,255,.15) 25%, transparent 25%, transparent 50%, rgba(255,255,255,.15) 50%, rgba(255,255,255,.15) 75%, transparent 75%, transparent);
}
h5.blue { height: 49px; line-height: 36px; }
h5.blue svg { margin-top: 3px; }
.grid { display: grid; grid-template-columns: 426px 427px; column-gap: 36px; row-gap: 24px; padding-top: 12px; }
.grid .lab { margin-bottom: 11px; }
.chev { margin: 0 -1px 1px 0; }

.help { width: 451px; }
.card-head { height: 65px; padding: 0 24px 9px; display: flex; align-items: center; gap: 11px; background: #f7f7f7; border-bottom: 1px solid #d3d3d3; border-radius: 9px 9px 0 0; }
h6 { font-size: 22.8px; font-weight: 600; line-height: 28.8px; letter-spacing: -0.25px; }
.card-head h6 { letter-spacing: -0.4px; }
.card-body { padding: 26px 24px 24px; }
.card-body h6 { margin-bottom: 11px; }
.card-body p { margin-bottom: 25px; font-size: 20px; line-height: 31.5px; letter-spacing: -0.12px; }
.card-body b { letter-spacing: -0.42px; }

/* ---------- alert dialog ---------- */
.dialog {
  position: absolute; left: 624px; top: 124px; width: 673px; height: 286px; padding: 32px 30px 30px;
  display: flex; flex-direction: column; border-radius: 18px; background: #fbfff4; color: #1a1c19;
  box-shadow: 0 0 0 1px rgba(120,130,115,.35), 0 3px 9px rgba(0,0,0,.25);
}
.dialog h2 { font-size: 22.8px; line-height: 36px; font-weight: 600; letter-spacing: -0.07px; }
.dialog p { margin-top: 11px; font-size: 18.8px; line-height: 30px; letter-spacing: -0.12px; }
.dialog button { width: 96px; height: 57px; margin: auto 0 0 auto; border: 0; border-radius: 29px; background: #356935; color: #fff; font: 600 19px "Open Sans", sans-serif; letter-spacing: -0.3px; }

/* ---------- taskbar ---------- */
.taskbar {
  height: 70px; flex: none; display: flex; color: #fff; border-top: 2px solid #45483a;
  background: linear-gradient(90deg, #1b2814 0, #1f2814 24%, #262714 38%, #2c2415 58%, #292414 70%, #282415 100%);
}
.widget { position: relative; width: 210px; padding: 21px 0 0 31px; }
.widget b { position: absolute; left: 47px; top: 9px; width: 23px; height: 23px; border-radius: 50%; background: #c42b1c; font: 400 16px/23px "Open Sans", sans-serif; text-align: center; }
.apps { display: flex; width: 1256px; height: 68px; }
.app { position: relative; width: 66.8px; height: 68px; display: flex; align-items: center; justify-content: center; }
.app.slim { width: 66px; }
.a4 { margin-left: 10px; }
.a5 { margin-left: 5px; }
.a6 { margin-left: 6px; }
.a7 { margin-left: 4px; }
.a8 { margin-left: 2px; }
.run::after { content: ""; position: absolute; left: calc(50% - 4.5px); bottom: 5px; width: 9px; height: 5px; border-radius: 3px; background: #a3a198; }
.hp { width: 36px; height: 36px; border-radius: 2px; background: #0e96d6; font-size: 13px; line-height: 35px; letter-spacing: -1px; text-align: center; font-style: normal; }
.hp b { font-size: 16px; font-style: italic; }
.ask { position: relative; width: 36px; height: 36px; border: 2px solid #fff; border-radius: 50%; background: #0e96d6; font: 700 28px/32px "Open Sans", sans-serif; text-align: center; }
.ask::after { content: ""; position: absolute; left: 18px; top: -10px; width: 24px; height: 24px; border-radius: 50%; background: #fbbf12; }
.mini { position: absolute; left: 42px; top: 8px; }
.seam { position: absolute; left: 37px; top: 2px; width: 1.500px; height: 66px; background: #b5b5b0; }
.app.g { width: 32px; margin-left: -16px; }
.more { margin: auto 0 auto 45px; }
.rule { width: 1.500px; height: 70px; margin: -2px 0 0 25px; background: #b0b0aa; }
.tray { display: flex; align-items: center; flex: 1; padding: 0 27px 0 53px; }
.cloud { margin-left: 28px; }
.lang { width: 40px; margin-left: 24px; font-size: 17px; line-height: 23px; text-align: center; letter-spacing: -0.2px; }
.wifi { margin-left: 25px; }
.vol { margin-left: 11px; }
.bat { margin-left: 12px; }
.clock { margin-left: auto; font-size: 17.6px; line-height: 24px; text-align: right; letter-spacing: 0; }
```
